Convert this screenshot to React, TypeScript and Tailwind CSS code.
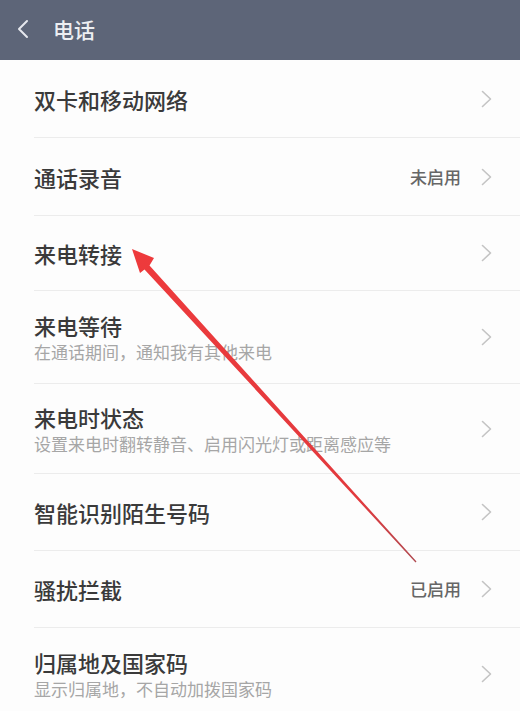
import React from "react";

type Item = { title: string; sub?: string; value?: string; h: string };

const items: Item[] = [
  { title: "双卡和移动网络", h: "h-[77px]" },
  { title: "通话录音", value: "未启用", h: "h-[78px]" },
  { title: "来电转接", h: "h-[75px]" },
  { title: "来电等待", sub: "在通话期间，通知我有其他来电", h: "h-[93px]" },
  { title: "来电时状态", sub: "设置来电时翻转静音、启用闪光灯或距离感应等", h: "h-[90px]" },
  { title: "智能识别陌生号码", h: "h-[77px]" },
  { title: "骚扰拦截", value: "已启用", h: "h-[77px]" },
  { title: "归属地及国家码", sub: "显示归属地，不自动加拨国家码", h: "h-[92px]" },
];

function Chevron() {
  return (
    <svg width="11" height="18" viewBox="0 0 11 18" className="shrink-0">
      <polyline points="1.5,1.5 9.5,9 1.5,16.5" fill="none" stroke="#c4c4c4" strokeWidth="1.6" strokeLinecap="round" strokeLinejoin="round" />
    </svg>
  );
}

export default function App() {
  return (
    <div
      className="relative w-[520px] h-[711px] overflow-hidden bg-[#fdfdfd]"
      style={{ fontFamily: '"Noto Sans CJK SC", "Noto Sans", sans-serif' }}
    >
      <div className="h-[60px] bg-[#5d6578] flex items-center pb-[2px]">
        <svg width="14" height="20" viewBox="0 0 14 20" className="ml-[16px]">
          <polyline points="11,2 3,10 11,18" fill="none" stroke="#e6e8ee" strokeWidth="2" strokeLinecap="round" strokeLinejoin="round" />
        </svg>
        <span className="ml-[23px] text-[21px] leading-none font-medium text-[#eceef2]">电话</span>
      </div>
      <div className="flex flex-col">
        {items.map((it, i) => (
          <div key={i} className="pl-[34px]">
            <div
              className={`flex items-center pr-[28px] ${i > 0 ? "border-t border-[#ececec]" : ""} ${it.h}`}
            >
              <div className="flex-1 flex flex-col">
                <div className="text-[22px] leading-[26px] font-medium text-[#3a3a3a]">{it.title}</div>
                {it.sub && (
                  <div className="mt-[4px] text-[17px] leading-[20px] text-[#a6a6a6]">{it.sub}</div>
                )}
              </div>
              {it.value && (
                <span className="mr-[20px] text-[17px] font-medium text-[#666666]">{it.value}</span>
              )}
              <Chevron />
            </div>
          </div>
        ))}
      </div>
      <svg
        className="absolute left-0 top-0 pointer-events-none"
        width="520"
        height="711"
        viewBox="0 0 520 711"
      >
        <defs>
          <linearGradient id="ar" x1="132" y1="249" x2="416" y2="562" gradientUnits="userSpaceOnUse">
            <stop offset="0" stopColor="#ee3a3c" />
            <stop offset="0.8" stopColor="#e23a3e" />
            <stop offset="1" stopColor="#b04a50" />
          </linearGradient>
        </defs>
        <polygon
          points="132,249 154,258 149.5,265.5 416.5,561.5 415.5,562.5 144.5,269.5 140,273"
          fill="url(#ar)"
        />
      </svg>
    </div>
  );
}
